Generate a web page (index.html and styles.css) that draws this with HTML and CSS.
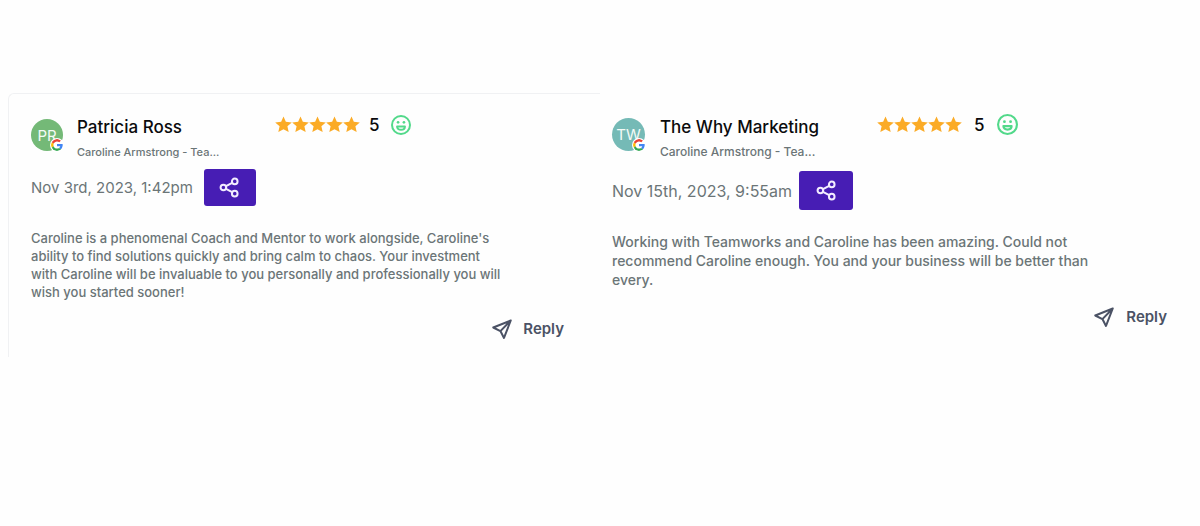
FILE: index.html
```html
<!DOCTYPE html>
<html lang="en">
<head>
<meta charset="utf-8">
<meta name="viewport" content="width=device-width, initial-scale=1">
<title>Reviews</title>
<link rel="stylesheet" href="styles.css">
</head>
<body>
<svg class="sprite" aria-hidden="true">
  <symbol id="star" viewBox="0 0 24 24"><path d="M12 .8l3.300 7.400 8.400 1-6.200 5.400 1.800 8.100L12 18.800l-7.300 3.900 1.800-8.100L.3 9.200l8.400-1z"/></symbol>
  <symbol id="smile" viewBox="0 0 24 24"><g fill="none" stroke="currentColor" stroke-width="2.400"><circle cx="12" cy="12" r="10.800"/><path d="M7.300 13.800h9.400c0 2.600-2 4-4.700 4s-4.700-1.400-4.700-4z" stroke-linejoin="round"/></g><circle cx="8.500" cy="8.800" r="1.600" fill="currentColor"/><circle cx="15.500" cy="8.800" r="1.600" fill="currentColor"/></symbol>
  <symbol id="share" viewBox="0 0 24 24"><g fill="none" stroke="currentColor" stroke-width="2.300"><circle cx="18" cy="5" r="3.200"/><circle cx="5" cy="12" r="3.200"/><circle cx="18" cy="19" r="3.200"/><path d="M8 13.600l7.100 3.800M15.100 6.600L8 10.400"/></g></symbol>
  <symbol id="send" viewBox="0 0 24 24"><path d="M22.500 1.800L1.500 10.200l8.600 4.300 4.300 8.200zM22.500 1.800L10.100 14.500" fill="none" stroke="currentColor" stroke-width="2.400" stroke-linejoin="round"/></symbol>
  <symbol id="google" viewBox="0 0 48 48"><path fill="#ea4335" d="M24 9.500c3.540 0 6.710 1.220 9.210 3.600l6.850-6.850C35.900 2.380 30.470 0 24 0 14.620 0 6.510 5.380 2.560 13.220l7.980 6.190C12.430 13.720 17.740 9.500 24 9.500z"/><path fill="#4285f4" d="M46.980 24.550c0-1.570-.15-3.090-.38-4.550H24v9.020h12.940c-.58 2.960-2.260 5.480-4.780 7.180l7.730 6c4.510-4.180 7.090-10.360 7.090-17.650z"/><path fill="#fbbc05" d="M10.530 28.590c-.48-1.450-.76-2.990-.76-4.590s.27-3.140.76-4.590l-7.980-6.190C.92 16.460 0 20.120 0 24c0 3.880.92 7.540 2.560 10.780l7.970-6.190z"/><path fill="#34a853" d="M24 48c6.480 0 11.930-2.130 15.890-5.810l-7.730-6c-2.150 1.450-4.920 2.300-8.160 2.300-6.260 0-11.570-4.220-13.470-9.910l-7.980 6.190C6.510 42.620 14.620 48 24 48z"/></symbol>
</svg>
<main class="reviews">
  <article class="review review-framed">
    <header class="head">
      <div class="avatar avatar-green">PR<svg class="badge" role="img" aria-label="Google"><use href="#google"/></svg></div>
      <div class="who">
        <h2 class="name">Patricia Ross</h2>
        <p class="source">Caroline Armstrong - Tea...</p>
      </div>
      <div class="rating">
        <span class="stars"><svg><use href="#star"/></svg><svg><use href="#star"/></svg><svg><use href="#star"/></svg><svg><use href="#star"/></svg><svg><use href="#star"/></svg></span>
        <span class="score">5</span>
        <svg class="mood"><use href="#smile"/></svg>
      </div>
    </header>
    <div class="meta">
      <time class="date" datetime="2023-11-03T13:42">Nov 3rd, 2023, 1:42pm</time>
      <button class="share" type="button" aria-label="Share"><svg><use href="#share"/></svg></button>
    </div>
    <p class="text">Caroline is a phenomenal Coach and Mentor to work alongside, Caroline's ability to find solutions quickly and bring calm to chaos. Your investment with Caroline will be invaluable to you personally and professionally you will wish you started sooner!</p>
    <button class="reply" type="button"><svg><use href="#send"/></svg>Reply</button>
  </article>
  <article class="review review-large">
    <header class="head">
      <div class="avatar avatar-teal">TW<svg class="badge" role="img" aria-label="Google"><use href="#google"/></svg></div>
      <div class="who">
        <h2 class="name">The Why Marketing</h2>
        <p class="source">Caroline Armstrong - Tea...</p>
      </div>
      <div class="rating">
        <span class="stars"><svg><use href="#star"/></svg><svg><use href="#star"/></svg><svg><use href="#star"/></svg><svg><use href="#star"/></svg><svg><use href="#star"/></svg></span>
        <span class="score">5</span>
        <svg class="mood"><use href="#smile"/></svg>
      </div>
    </header>
    <div class="meta">
      <time class="date" datetime="2023-11-15T09:55">Nov 15th, 2023, 9:55am</time>
      <button class="share" type="button" aria-label="Share"><svg><use href="#share"/></svg></button>
    </div>
    <p class="text">Working with Teamworks and Caroline has been amazing. Could not recommend Caroline enough. You and your business will be better than every.</p>
    <button class="reply" type="button"><svg><use href="#send"/></svg>Reply</button>
  </article>
</main>
</body>
</html>
```
FILE: styles.css
```css
* { box-sizing: border-box; }

body {
  margin: 0;
  background: #fefefe;
  color: #6b7577;
  font-family: Inter, "Liberation Sans", sans-serif;
}

h2, p { margin: 0; }
button { border: 0; padding: 0; font: inherit; cursor: pointer; }
svg { display: block; flex: none; }
.sprite { position: absolute; width: 0; height: 0; }

.reviews {
  display: grid;
  grid-template-columns: 1fr 1fr;
  align-items: start;
  padding-top: 93px;
}

.review {
  display: flex;
  flex-direction: column;
  padding: 23px 33px 18px 12px;
}

.review-framed {
  margin-left: 8px;
  padding: 22px 36px 18px 22px;
  border: solid #f0f1f3;
  border-width: 1px 0 0 1px;
  border-top-left-radius: 6px;
}

.head { display: flex; align-items: flex-start; }

.avatar {
  position: relative;
  display: grid;
  place-items: center;
  flex: none;
  width: 32px;
  height: 32px;
  margin: 3px 14px 0 0;
  border-radius: 50%;
  color: #f4fbf6;
  font-size: 15px;
}
.avatar-green { background: #74b977; }
.avatar-teal { background: #75bab6; }

.badge {
  position: absolute;
  right: -1px;
  bottom: -1px;
  width: 14px;
  height: 14px;
  padding: 1px;
  border-radius: 50%;
  background: #fff;
}

.who { width: 198px; }
.name { color: #0b0b0d; font-size: 17px; font-weight: 500; line-height: 22px; }
.source { margin-top: 6px; font-size: 11px; font-weight: 500; line-height: 16px; }

.rating { display: flex; align-items: center; height: 17px; }
.stars { display: flex; color: #fbab26; fill: currentColor; }
.stars svg { width: 17px; height: 17px; }
.score { margin: 0 11px 0 9px; color: #0b0b0d; font-size: 17px; font-weight: 500; line-height: 18px; }
.mood { width: 20px; height: 20px; overflow: visible; color: #52d98a; }

.meta { display: flex; align-items: center; gap: 11px; margin-top: 9px; }
.date { font-size: 15px; line-height: 20px; }
.share {
  display: grid;
  place-items: center;
  width: 52px;
  height: 37px;
  border-radius: 3px;
  background: #471db4;
  color: #f3edff;
}
.share svg { width: 21px; height: 21px; }

.text { max-width: 478px; margin-top: 23px; font-size: 13px; font-weight: 500; line-height: 18px; }

.reply {
  display: flex;
  align-items: center;
  align-self: flex-end;
  gap: 11px;
  margin-top: 18px;
  background: none;
  color: #4b5265;
  font-size: 15px;
  font-weight: 600;
  line-height: 20px;
}
.reply svg { width: 20px; height: 20px; }

.review-large .avatar { width: 33px; height: 33px; margin: 2px 15px 0 0; }
.review-large .who { width: 217px; }
.review-large .source { font-size: 12px; }
.review-large .score { margin: 0 12px; }
.review-large .mood { width: 21px; height: 21px; }
.review-large .meta { gap: 7px; margin-top: 11px; }
.review-large .date { font-size: 16px; }
.review-large .share { width: 54px; height: 39px; }
.review-large .text { max-width: 484px; margin-top: 22px; font-size: 14px; line-height: 19px; }
.review-large .reply { gap: 12px; }
```
